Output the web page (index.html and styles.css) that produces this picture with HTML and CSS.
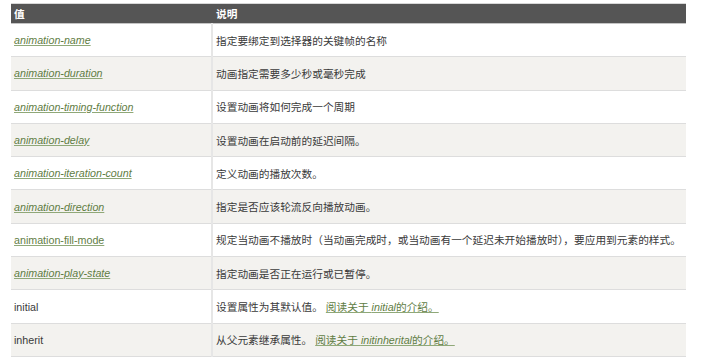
FILE: index.html
```html
<!DOCTYPE html>
<html lang="zh">
<head>
<meta charset="utf-8">
<link rel="stylesheet" href="styles.css">
</head>
<body>
<table class="reference">
  <tr class="head">
    <th class="c1">值</th>
    <th class="c2">说明</th>
  </tr>
  <tr><td class="c1"><a class="lnk it" href="#">animation-name</a></td><td class="c2">指定要绑定到选择器的关键帧的名称</td></tr>
  <tr><td class="c1"><a class="lnk it" href="#">animation-duration</a></td><td class="c2">动画指定需要多少秒或毫秒完成</td></tr>
  <tr><td class="c1"><a class="lnk it" href="#">animation-timing-function</a></td><td class="c2">设置动画将如何完成一个周期</td></tr>
  <tr><td class="c1"><a class="lnk it" href="#">animation-delay</a></td><td class="c2">设置动画在启动前的延迟间隔。</td></tr>
  <tr><td class="c1"><a class="lnk it" href="#">animation-iteration-count</a></td><td class="c2">定义动画的播放次数。</td></tr>
  <tr><td class="c1"><a class="lnk it" href="#">animation-direction</a></td><td class="c2">指定是否应该轮流反向播放动画。</td></tr>
  <tr><td class="c1"><a class="lnk" href="#">animation-fill-mode</a></td><td class="c2">规定当动画不播放时（当动画完成时，或当动画有一个延迟未开始播放时），要应用到元素的样式。</td></tr>
  <tr><td class="c1"><a class="lnk it" href="#">animation-play-state</a></td><td class="c2">指定动画是否正在运行或已暂停。</td></tr>
  <tr><td class="c1">initial</td><td class="c2">设置属性为其默认值。 <a class="lnk" href="#">阅读关于 <i>initial</i>的介绍。</a></td></tr>
  <tr><td class="c1">inherit</td><td class="c2">从父元素继承属性。 <a class="lnk" href="#">阅读关于 <i>initinherital</i>的介绍。</a></td></tr>
</table>
</body>
</html>
```
FILE: styles.css
```css
html, body {
  margin: 0;
  padding: 0;
  background: #ffffff;
}
body {
  padding: 3px 17px 0 11px;
  font-family: "Liberation Sans", Arial, "Noto Sans CJK SC", sans-serif;
  font-size: 10.7px;
  color: #3a3a3a;
}
.reference {
  width: 675px;
  border-collapse: collapse;
  border-spacing: 0;
  table-layout: fixed;
}
.reference th {
  background: #555555;
  color: #ffffff;
  font-weight: bold;
  text-align: left;
  height: 19px;
  padding: 0 3px;
  border-top: 1px solid #d8d8d8;
  border-bottom: 1px solid #c4c4c4;
  line-height: 18px;
}
.reference td {
  height: 33.3px;
  padding: 0 3px;
  border-bottom: 1px solid #dddddd;
  vertical-align: middle;
  box-sizing: border-box;
  white-space: nowrap;
}
.reference tr:nth-child(odd) td {
  background: #f3f2ef;
}
.reference .c1 {
  width: 195px;
}
.reference td.c2 {
  border-left: 2px solid #e6e6e6;
}
.reference th.c2 {
  padding-left: 4px;
}
.lnk {
  color: #5f7d44;
  text-decoration: underline;
  text-decoration-color: #8fa878;
}
.it {
  font-style: italic;
}
```
